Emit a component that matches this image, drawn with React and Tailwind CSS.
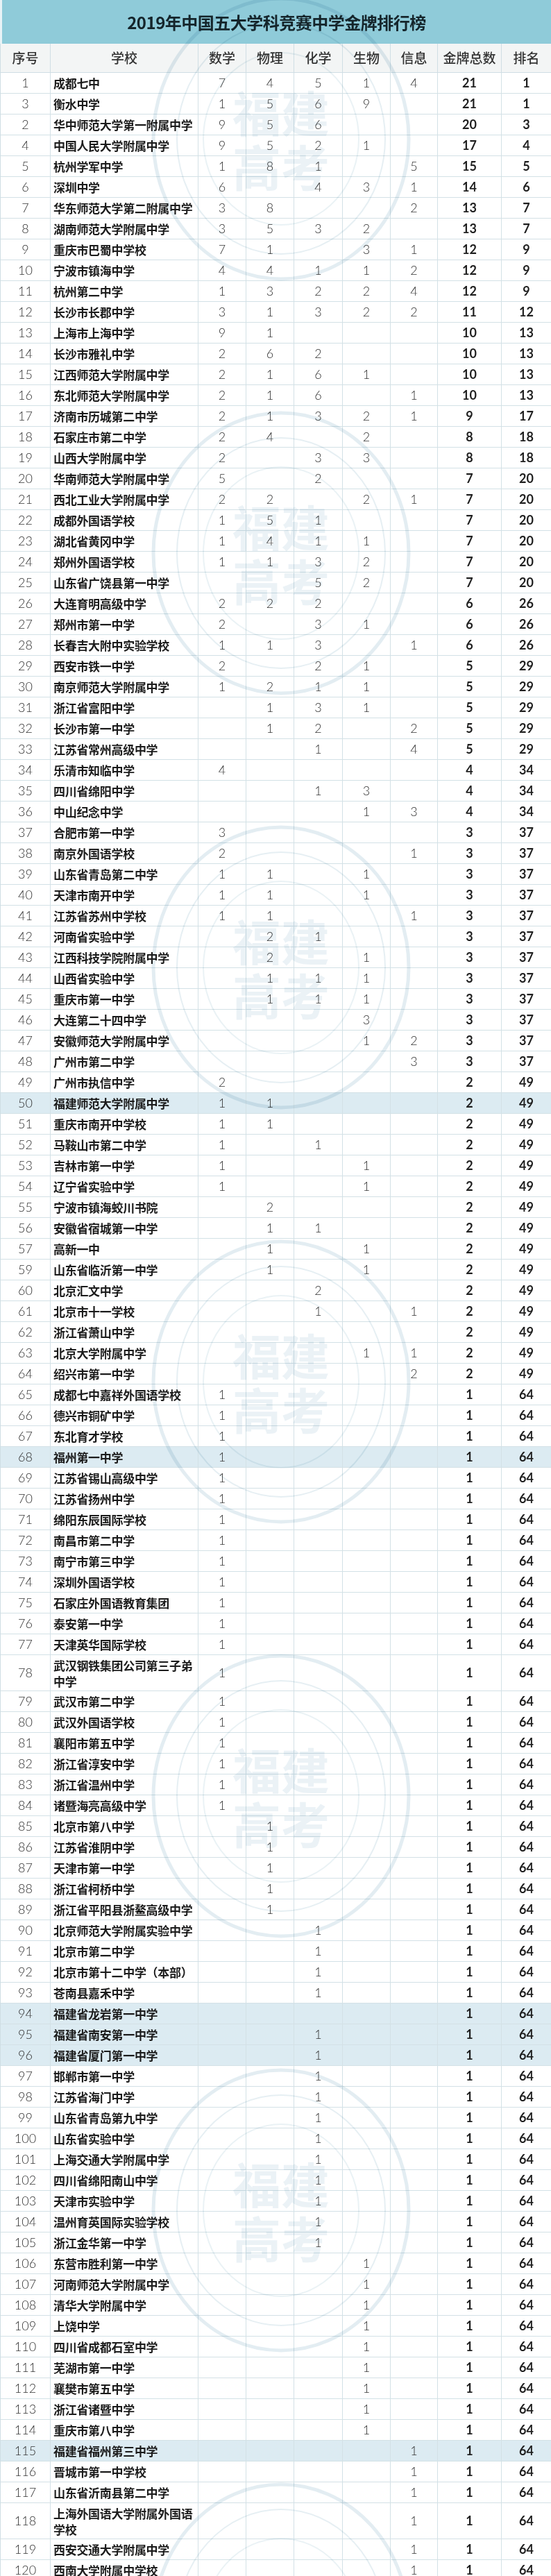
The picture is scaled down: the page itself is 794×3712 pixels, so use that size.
import React from 'react';

// 序号, 学校, 数学, 物理, 化学, 生物, 信息, 金牌总数, 排名
const rows = [
  [1, '成都七中', 7, 4, 5, 1, 4, 21, 1],
  [3, '衡水中学', 1, 5, 6, 9, '', 21, 1],
  [2, '华中师范大学第一附属中学', 9, 5, 6, '', '', 20, 3],
  [4, '中国人民大学附属中学', 9, 5, 2, 1, '', 17, 4],
  [5, '杭州学军中学', 1, 8, 1, '', 5, 15, 5],
  [6, '深圳中学', 6, '', 4, 3, 1, 14, 6],
  [7, '华东师范大学第二附属中学', 3, 8, '', '', 2, 13, 7],
  [8, '湖南师范大学附属中学', 3, 5, 3, 2, '', 13, 7],
  [9, '重庆市巴蜀中学校', 7, 1, '', 3, 1, 12, 9],
  [10, '宁波市镇海中学', 4, 4, 1, 1, 2, 12, 9],
  [11, '杭州第二中学', 1, 3, 2, 2, 4, 12, 9],
  [12, '长沙市长郡中学', 3, 1, 3, 2, 2, 11, 12],
  [13, '上海市上海中学', 9, 1, '', '', '', 10, 13],
  [14, '长沙市雅礼中学', 2, 6, 2, '', '', 10, 13],
  [15, '江西师范大学附属中学', 2, 1, 6, 1, '', 10, 13],
  [16, '东北师范大学附属中学', 2, 1, 6, '', 1, 10, 13],
  [17, '济南市历城第二中学', 2, 1, 3, 2, 1, 9, 17],
  [18, '石家庄市第二中学', 2, 4, '', 2, '', 8, 18],
  [19, '山西大学附属中学', 2, '', 3, 3, '', 8, 18],
  [20, '华南师范大学附属中学', 5, '', 2, '', '', 7, 20],
  [21, '西北工业大学附属中学', 2, 2, '', 2, 1, 7, 20],
  [22, '成都外国语学校', 1, 5, 1, '', '', 7, 20],
  [23, '湖北省黄冈中学', 1, 4, 1, 1, '', 7, 20],
  [24, '郑州外国语学校', 1, 1, 3, 2, '', 7, 20],
  [25, '山东省广饶县第一中学', '', '', 5, 2, '', 7, 20],
  [26, '大连育明高级中学', 2, 2, 2, '', '', 6, 26],
  [27, '郑州市第一中学', 2, '', 3, 1, '', 6, 26],
  [28, '长春吉大附中实验学校', 1, 1, 3, '', 1, 6, 26],
  [29, '西安市铁一中学', 2, '', 2, 1, '', 5, 29],
  [30, '南京师范大学附属中学', 1, 2, 1, 1, '', 5, 29],
  [31, '浙江省富阳中学', '', 1, 3, 1, '', 5, 29],
  [32, '长沙市第一中学', '', 1, 2, '', 2, 5, 29],
  [33, '江苏省常州高级中学', '', '', 1, '', 4, 5, 29],
  [34, '乐清市知临中学', 4, '', '', '', '', 4, 34],
  [35, '四川省绵阳中学', '', '', 1, 3, '', 4, 34],
  [36, '中山纪念中学', '', '', '', 1, 3, 4, 34],
  [37, '合肥市第一中学', 3, '', '', '', '', 3, 37],
  [38, '南京外国语学校', 2, '', '', '', 1, 3, 37],
  [39, '山东省青岛第二中学', 1, 1, '', 1, '', 3, 37],
  [40, '天津市南开中学', 1, 1, '', 1, '', 3, 37],
  [41, '江苏省苏州中学校', 1, 1, '', '', 1, 3, 37],
  [42, '河南省实验中学', '', 2, 1, '', '', 3, 37],
  [43, '江西科技学院附属中学', '', 2, '', 1, '', 3, 37],
  [44, '山西省实验中学', '', 1, 1, 1, '', 3, 37],
  [45, '重庆市第一中学', '', 1, 1, 1, '', 3, 37],
  [46, '大连第二十四中学', '', '', '', 3, '', 3, 37],
  [47, '安徽师范大学附属中学', '', '', '', 1, 2, 3, 37],
  [48, '广州市第二中学', '', '', '', '', 3, 3, 37],
  [49, '广州市执信中学', 2, '', '', '', '', 2, 49],
  [50, '福建师范大学附属中学', 1, 1, '', '', '', 2, 49],
  [51, '重庆市南开中学校', 1, 1, '', '', '', 2, 49],
  [52, '马鞍山市第二中学', 1, '', 1, '', '', 2, 49],
  [53, '吉林市第一中学', 1, '', '', 1, '', 2, 49],
  [54, '辽宁省实验中学', 1, '', '', 1, '', 2, 49],
  [55, '宁波市镇海蛟川书院', '', 2, '', '', '', 2, 49],
  [56, '安徽省宿城第一中学', '', 1, 1, '', '', 2, 49],
  [57, '高新一中', '', 1, '', 1, '', 2, 49],
  [59, '山东省临沂第一中学', '', 1, '', 1, '', 2, 49],
  [60, '北京汇文中学', '', '', 2, '', '', 2, 49],
  [61, '北京市十一学校', '', '', 1, '', 1, 2, 49],
  [62, '浙江省萧山中学', '', '', '', '', '', 2, 49],
  [63, '北京大学附属中学', '', '', '', 1, 1, 2, 49],
  [64, '绍兴市第一中学', '', '', '', '', 2, 2, 49],
  [65, '成都七中嘉祥外国语学校', 1, '', '', '', '', 1, 64],
  [66, '德兴市铜矿中学', 1, '', '', '', '', 1, 64],
  [67, '东北育才学校', 1, '', '', '', '', 1, 64],
  [68, '福州第一中学', 1, '', '', '', '', 1, 64],
  [69, '江苏省锡山高级中学', 1, '', '', '', '', 1, 64],
  [70, '江苏省扬州中学', 1, '', '', '', '', 1, 64],
  [71, '绵阳东辰国际学校', 1, '', '', '', '', 1, 64],
  [72, '南昌市第二中学', 1, '', '', '', '', 1, 64],
  [73, '南宁市第三中学', 1, '', '', '', '', 1, 64],
  [74, '深圳外国语学校', 1, '', '', '', '', 1, 64],
  [75, '石家庄外国语教育集团', 1, '', '', '', '', 1, 64],
  [76, '泰安第一中学', 1, '', '', '', '', 1, 64],
  [77, '天津英华国际学校', 1, '', '', '', '', 1, 64],
  [78, '武汉钢铁集团公司第三子弟中学', 1, '', '', '', '', 1, 64],
  [79, '武汉市第二中学', 1, '', '', '', '', 1, 64],
  [80, '武汉外国语学校', 1, '', '', '', '', 1, 64],
  [81, '襄阳市第五中学', 1, '', '', '', '', 1, 64],
  [82, '浙江省淳安中学', 1, '', '', '', '', 1, 64],
  [83, '浙江省温州中学', 1, '', '', '', '', 1, 64],
  [84, '诸暨海亮高级中学', 1, '', '', '', '', 1, 64],
  [85, '北京市第八中学', '', 1, '', '', '', 1, 64],
  [86, '江苏省淮阴中学', '', 1, '', '', '', 1, 64],
  [87, '天津市第一中学', '', 1, '', '', '', 1, 64],
  [88, '浙江省柯桥中学', '', 1, '', '', '', 1, 64],
  [89, '浙江省平阳县浙鳌高级中学', '', 1, '', '', '', 1, 64],
  [90, '北京师范大学附属实验中学', '', '', 1, '', '', 1, 64],
  [91, '北京市第二中学', '', '', 1, '', '', 1, 64],
  [92, '北京市第十二中学（本部）', '', '', 1, '', '', 1, 64],
  [93, '苍南县嘉禾中学', '', '', 1, '', '', 1, 64],
  [94, '福建省龙岩第一中学', '', '', '', '', '', 1, 64],
  [95, '福建省南安第一中学', '', '', 1, '', '', 1, 64],
  [96, '福建省厦门第一中学', '', '', 1, '', '', 1, 64],
  [97, '邯郸市第一中学', '', '', 1, '', '', 1, 64],
  [98, '江苏省海门中学', '', '', 1, '', '', 1, 64],
  [99, '山东省青岛第九中学', '', '', 1, '', '', 1, 64],
  [100, '山东省实验中学', '', '', 1, '', '', 1, 64],
  [101, '上海交通大学附属中学', '', '', 1, '', '', 1, 64],
  [102, '四川省绵阳南山中学', '', '', 1, '', '', 1, 64],
  [103, '天津市实验中学', '', '', 1, '', '', 1, 64],
  [104, '温州育英国际实验学校', '', '', 1, '', '', 1, 64],
  [105, '浙江金华第一中学', '', '', 1, '', '', 1, 64],
  [106, '东营市胜利第一中学', '', '', '', 1, '', 1, 64],
  [107, '河南师范大学附属中学', '', '', '', 1, '', 1, 64],
  [108, '清华大学附属中学', '', '', '', 1, '', 1, 64],
  [109, '上饶中学', '', '', '', 1, '', 1, 64],
  [110, '四川省成都石室中学', '', '', '', 1, '', 1, 64],
  [111, '芜湖市第一中学', '', '', '', 1, '', 1, 64],
  [112, '襄樊市第五中学', '', '', '', 1, '', 1, 64],
  [113, '浙江省诸暨中学', '', '', '', 1, '', 1, 64],
  [114, '重庆市第八中学', '', '', '', 1, '', 1, 64],
  [115, '福建省福州第三中学', '', '', '', '', 1, 1, 64],
  [116, '晋城市第一中学校', '', '', '', '', 1, 1, 64],
  [117, '山东省沂南县第二中学', '', '', '', '', 1, 1, 64],
  [118, '上海外国语大学附属外国语学校', '', '', '', '', 1, 1, 64],
  [119, '西安交通大学附属中学', '', '', '', '', 1, 1, 64],
  [120, '西南大学附属中学校', '', '', '', '', 1, 1, 64],
];

const highlighted = [50, 68, 94, 95, 96, 115];
const headers = ['序号', '学校', '数学', '物理', '化学', '生物', '信息', '金牌总数', '排名'];

// faint seal watermark, repeated down the page
const Seal = () => (
  <div className="relative w-[374px] h-[410px] shrink-0">
    <svg width="374" height="410" viewBox="0 0 374 410" className="absolute inset-0">
      <ellipse cx="187" cy="205" rx="184" ry="202" fill="none" stroke="#e3edf2" strokeWidth="5" />
      <ellipse cx="187" cy="205" rx="150" ry="166" fill="none" stroke="#e6eff3" strokeWidth="2" />
      <ellipse cx="187" cy="205" rx="112" ry="124" fill="none" stroke="#eaf2f5" strokeWidth="2" />
    </svg>
    <div className="absolute inset-0 flex flex-col items-center justify-center text-[#ebf2f6] text-[70px] leading-[78px] font-bold font-['Noto_Sans_CJK_SC',sans-serif]">
      <span>福建</span>
      <span>高考</span>
    </div>
  </div>
);

const App = () => {
  const cell = 'border-r border-b border-[#d3e1e6] flex items-center';
  return (
    <div className="relative w-[794px] bg-white overflow-hidden">
      <div className="h-[63px] bg-[#8fcbd9] flex items-center justify-center border-l-[3px] border-[#e9f3f6]">
        <h1 className="text-[24px] font-bold text-[#15252b] tracking-[-0.5px] font-['Noto_Sans_CJK_SC',sans-serif]">
          2019年中国五大学科竞赛中学金牌排行榜
        </h1>
      </div>

      <div className="grid grid-cols-[72px_213px_69px_69px_70px_69px_68px_92px_72px] border-l border-[#cfdee4]">
        {headers.map((h) => (
          <div
            key={h}
            className="h-[42px] bg-[#f3f5f5] border-r border-b border-[#cfdee4] flex items-center justify-center text-[19px] font-medium text-[#333] font-['Noto_Sans_CJK_SC',sans-serif]"
          >
            {h}
          </div>
        ))}

        {rows.map((r) => {
          const hl = highlighted.includes(r[0]);
          const tall = r[1].length > 12;
          const base = `${cell} ${tall ? 'h-[52px]' : 'h-[30px]'} ${hl ? 'bg-[#dcebf2]' : 'bg-white'}`;
          return (
            <React.Fragment key={r[0]}>
              <div className={`${base} justify-center text-[18px] font-light text-[#333] font-['Lato',sans-serif]`}>{r[0]}</div>
              <div className={`${base} pl-[4px] text-[17px] leading-[23px] tracking-[-0.3px] font-bold text-[#1b1b1b] font-['Noto_Sans_CJK_SC',sans-serif]`}>
                {tall ? (
                  <div className="flex flex-col">
                    <span className="whitespace-nowrap">{r[1].slice(0, 12)}</span>
                    <span className="whitespace-nowrap">{r[1].slice(12)}</span>
                  </div>
                ) : (
                  <span className="whitespace-nowrap">{r[1]}</span>
                )}
              </div>
              {[2, 3, 4, 5, 6].map((i) => (
                <div key={i} className={`${base} justify-center text-[18px] font-light text-[#333] font-['Lato',sans-serif]`}>
                  {r[i]}
                </div>
              ))}
              <div className={`${base} justify-center text-[18px] font-bold text-[#1f1f1f] font-['Lato',sans-serif]`}>{r[7]}</div>
              <div className={`${base} justify-center text-[18px] font-bold text-[#1f1f1f] font-['Lato',sans-serif]`}>{r[8]}</div>
            </React.Fragment>
          );
        })}
      </div>

      {/* watermark overlay */}
      <div className="absolute inset-x-0 top-[-5px] pointer-events-none mix-blend-multiply flex flex-col items-center gap-[187px] pl-[16px]">
        {[0, 1, 2, 3, 4, 5, 6].map((i) => (
          <Seal key={i} />
        ))}
      </div>
    </div>
  );
};

export default App;
